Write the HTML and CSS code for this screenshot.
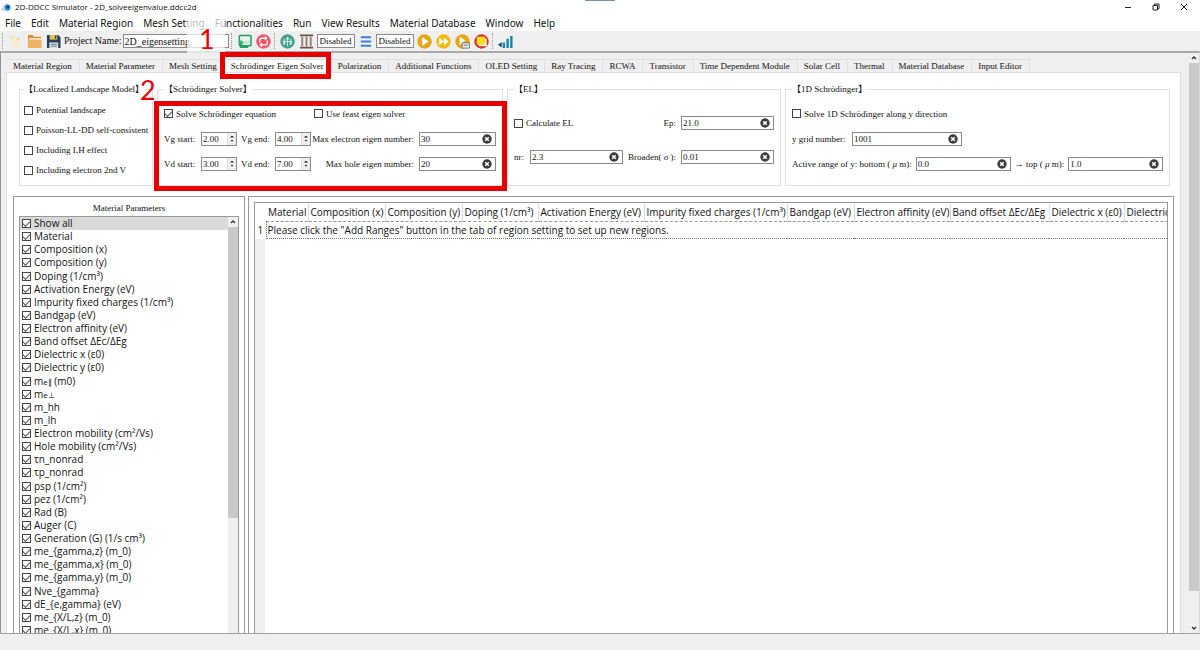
FILE: index.html
```html
<!DOCTYPE html>
<html lang="en">
<head>
<meta charset="utf-8">
<title>2D-DDCC Simulator</title>
<link rel="stylesheet" href="styles.css">
</head>
<body>
<svg class="defs" aria-hidden="true">
  <symbol id="clear" viewBox="0 0 10 10"><circle cx="5" cy="5" r="4.7" fill="#3c3c3c"/><path d="M3.2 3.2l3.6 3.6M6.8 3.2L3.2 6.8" stroke="#fff" stroke-width="1.5"/></symbol>
</svg>
<div class="window">
  <header class="titlebar">
    <svg class="app-icon" viewBox="0 0 12 12"><circle cx="6" cy="6" r="5" fill="#d8ecf8"/><circle cx="7" cy="6" r="3.2" fill="#2c86c8"/><circle cx="7.6" cy="5.4" r="1.5" fill="#123c70"/><circle cx="2" cy="8" r="1" fill="#7bb6dc"/></svg>
    <span class="title">2D-DDCC Simulator - 2D_solveeigenvalue.ddcc2d</span>
    <div class="window-buttons">
      <button type="button" aria-label="Minimize"><svg viewBox="0 0 8 8"><path d="M1 4.5h6" /></svg></button>
      <button type="button" aria-label="Restore"><svg viewBox="0 0 8 8"><path d="M1 2.5h4.500v4.500H1zM2.500 2.500V1H7v4.500H5.500"/></svg></button>
      <button type="button" aria-label="Close"><svg viewBox="0 0 8 8"><path d="M1 1l6 6M7 1L1 7"/></svg></button>
    </div>
  </header>
  <nav class="menubar">
    <button type="button">File</button><button type="button">Edit</button><button type="button">Material Region</button><button type="button">Mesh Setting</button><button type="button">Functionalities</button><button type="button">Run</button><button type="button">View Results</button><button type="button">Material Database</button><button type="button">Window</button><button type="button">Help</button>
  </nav>
  <div class="toolbar">
    <i class="handle"></i>
    <button type="button" class="tool" aria-label="New"><svg viewBox="0 0 16 16"><path d="M4 3h6l3 3v8H4z" fill="#f6eccb"/><path d="M10 3v3h3z" fill="#e2d3a0"/><path d="M4 1v5M2 3.500h4" stroke="#f4e3a4"/></svg></button>
    <button type="button" class="tool" aria-label="Open"><svg viewBox="0 0 16 16"><path d="M1 1h5l1.500 2H15v10H1z" fill="#d9913c"/><path d="M2 4.500h13v2H2z" fill="#fff3dd"/><path d="M1 6h14.500v9H1z" fill="#f0b263"/></svg></button>
    <button type="button" class="tool" aria-label="Save"><svg viewBox="0 0 16 16"><path d="M1 1h12l2.500 2.500V15H1z" fill="#28415c"/><path d="M4 1h8v5H4z" fill="#e9c34a"/><path d="M9.500 1.500h1.500v3.500H9.500z" fill="#28415c"/><path d="M3.500 9h9.500v6H3.500z" fill="#d5dde4"/><path d="M5 11h6.500M5 13h6.500" stroke="#6d7c8b"/></svg></button>
    <label for="project">Project Name:</label>
    <input id="project" class="project" type="text" value="2D_eigensetting">
    <i class="handle"></i>
    <button type="button" class="tool" aria-label="Display"><svg viewBox="0 0 16 16"><rect x="2.500" y="1.500" width="12.500" height="11" rx="1" fill="#e6f5ec" stroke="#219b5d" stroke-width="1.600"/><path d="M6 10l3-4 2 2 3-3v6z" fill="#c3e8d3"/><path d="M3 9h2.500v3.500H12V15H3z" fill="#24a35f"/><path d="M4.500 6l3.500 4H1z" fill="#38bd76"/></svg></button>
    <button type="button" class="tool" aria-label="Refresh"><svg viewBox="0 0 16 16"><circle cx="8" cy="8" r="7.700" fill="#ed5565"/><path d="M4 9V6.500A2 2 0 0 1 6 4.500h4M12 7v2.500a2 2 0 0 1-2 2H6" fill="none" stroke="#fff" stroke-width="1.400"/><path d="M9.500 2l3 2.500-3 2.500zM6.500 9v5l-3-2.500z" fill="#fff"/></svg></button>
    <i class="handle"></i>
    <button type="button" class="tool" aria-label="Mesh"><svg viewBox="0 0 16 16"><circle cx="8" cy="8" r="7.700" fill="#47a08d"/><path d="M8 3v10M4.500 5v6M11.500 5v6M3 8h10" stroke="#d7f0e9" stroke-width="1"/><circle cx="8" cy="5" r="1.400" fill="#d7f0e9"/><circle cx="4.500" cy="10" r="1.300" fill="#d7f0e9"/><circle cx="11.500" cy="10" r="1.300" fill="#d7f0e9"/></svg></button>
    <button type="button" class="tool" aria-label="Columns"><svg viewBox="0 0 16 16"><path d="M1 1.500h14M1 14.500h14" stroke="#6c5148" stroke-width="2"/><path d="M3.500 3v10M8 3v10M12.500 3v10" stroke="#937d75" stroke-width="2"/></svg></button>
    <input class="state" type="text" value="Disabled" aria-label="Column state" readonly>
    <button type="button" class="tool" aria-label="Rows"><svg viewBox="0 0 16 16"><path d="M3 3.500h11M3 8h11M3 12.500h11" stroke="#3a83d8" stroke-width="2.200"/></svg></button>
    <input class="state" type="text" value="Disabled" aria-label="Row state" readonly>
    <button type="button" class="tool" aria-label="Run"><svg viewBox="0 0 16 16"><circle cx="8" cy="8" r="7.700" fill="#e5a812"/><path d="M5.500 3.500l7 4.500-7 4.500z" fill="#fff"/></svg></button>
    <button type="button" class="tool" aria-label="Run all"><svg viewBox="0 0 16 16"><circle cx="8" cy="8" r="7.700" fill="#f0b914"/><path d="M3.500 4l5 4-5 4zM8.500 4l5 4-5 4z" fill="#fff"/></svg></button>
    <button type="button" class="tool" aria-label="Run script"><svg viewBox="0 0 16 16"><circle cx="8" cy="8" r="7.700" fill="#e5a812"/><path d="M5 3l6 4-6 5z" fill="#fff"/><path d="M7.500 9.500h8V15h-8z" fill="#f4f4ef" stroke="#75705e"/><path d="M9 12h5" stroke="#4b6f86"/></svg></button>
    <button type="button" class="tool" aria-label="Stop"><svg viewBox="0 0 16 16"><circle cx="8" cy="8" r="7.700" fill="#d8332c"/><path d="M5 5h8.500v8H5z" fill="#fff"/><rect x="3" y="3" width="9" height="8.500" rx="1" fill="#f8df22"/></svg></button>
    <i class="handle"></i>
    <button type="button" class="tool chart" aria-label="Chart"><svg viewBox="0 0 16 16"><path d="M5 9h2.500v6H5zM9 5h2.500v10H9zM13 2h2.500v13H13z" fill="#1681ae"/><path d="M0 11.500l4-3v6z" fill="#164d73"/></svg></button>
  </div>
  <main class="workspace">
    <div class="content">
      <div class="tabs" role="tablist">
        <button type="button" role="tab">Material Region</button><button type="button" role="tab">Material Parameter</button><button type="button" role="tab">Mesh Setting</button><button type="button" role="tab" class="active" aria-selected="true">Schrödinger Eigen Solver</button><button type="button" role="tab">Polarization</button><button type="button" role="tab">Additional Functions</button><button type="button" role="tab">OLED Setting</button><button type="button" role="tab">Ray Tracing</button><button type="button" role="tab">RCWA</button><button type="button" role="tab">Transistor</button><button type="button" role="tab">Time Dependent Module</button><button type="button" role="tab">Solar Cell</button><button type="button" role="tab">Thermal</button><button type="button" role="tab">Material Database</button><button type="button" role="tab">Input Editor</button>
      </div>
      <section class="page">
        <div class="groups">
          <fieldset class="landscape">
            <legend>【Localized Landscape Model】</legend>
            <label class="check"><input type="checkbox">Potential landscape</label>
            <label class="check"><input type="checkbox">Poisson-LL-DD self-consistent</label>
            <label class="check"><input type="checkbox">Including LH effect</label>
            <label class="check"><input type="checkbox">Including electron 2nd V</label>
          </fieldset>
          <fieldset class="solver">
            <legend>【Schrödinger Solver】</legend>
            <label class="check wide"><input type="checkbox" checked>Solve Schrödinger equation</label>
            <label class="check pair"><input type="checkbox">Use feast eigen solver</label>
            <label for="vgs">Vg start:</label>
            <span class="spin"><input id="vgs" type="text" value="2.00"><span class="steps"><button type="button" aria-label="Up"></button><button type="button" aria-label="Down"></button></span></span>
            <label for="vge" class="end">Vg end:</label>
            <span class="spin"><input id="vge" type="text" value="4.00"><span class="steps"><button type="button" aria-label="Up"></button><button type="button" aria-label="Down"></button></span></span>
            <label for="maxe" class="right">Max electron eigen number:</label>
            <span class="field"><input id="maxe" type="text" value="30"><button type="button" aria-label="Clear"><svg><use href="#clear"/></svg></button></span>
            <label for="vds">Vd start:</label>
            <span class="spin"><input id="vds" type="text" value="3.00"><span class="steps"><button type="button" aria-label="Up"></button><button type="button" aria-label="Down"></button></span></span>
            <label for="vde" class="end">Vd end:</label>
            <span class="spin"><input id="vde" type="text" value="7.00"><span class="steps"><button type="button" aria-label="Up"></button><button type="button" aria-label="Down"></button></span></span>
            <label for="maxh" class="right">Max hole eigen number:</label>
            <span class="field"><input id="maxh" type="text" value="20"><button type="button" aria-label="Clear"><svg><use href="#clear"/></svg></button></span>
          </fieldset>
          <fieldset class="el">
            <legend>【EL】</legend>
            <label class="check wide"><input type="checkbox">Calculate EL</label>
            <label for="ep" class="right">Ep:</label>
            <span class="field"><input id="ep" type="text" value="21.0"><button type="button" aria-label="Clear"><svg><use href="#clear"/></svg></button></span>
            <label for="nr">nr:</label>
            <span class="field"><input id="nr" type="text" value="2.3"><button type="button" aria-label="Clear"><svg><use href="#clear"/></svg></button></span>
            <label for="broaden" class="right">Broaden( <em>σ</em> ):</label>
            <span class="field"><input id="broaden" type="text" value="0.01"><button type="button" aria-label="Clear"><svg><use href="#clear"/></svg></button></span>
          </fieldset>
          <fieldset class="oned">
            <legend>【1D Schrödinger】</legend>
            <label class="check"><input type="checkbox">Solve 1D Schrödinger along y direction</label>
            <div class="line">
              <label for="grid" class="grid-label">y grid number:</label>
              <span class="field grid-field"><input id="grid" type="text" value="1001"><button type="button" aria-label="Clear"><svg><use href="#clear"/></svg></button></span>
            </div>
            <div class="line">
              <label for="bottom">Active range of y: bottom ( <em>μ</em> m):</label>
              <span class="field"><input id="bottom" type="text" value="0.0"><button type="button" aria-label="Clear"><svg><use href="#clear"/></svg></button></span>
              <label for="top">→ top ( <em>μ</em> m):</label>
              <span class="field"><input id="top" type="text" value="1.0"><button type="button" aria-label="Clear"><svg><use href="#clear"/></svg></button></span>
            </div>
          </fieldset>
        </div>
        <div class="panels">
          <section class="panel params">
            <h2>Material Parameters</h2>
            <div class="listbox">
              <div class="rows">
                <label class="selected"><input type="checkbox" checked>Show all</label>
                <label><input type="checkbox" checked>Material</label>
                <label><input type="checkbox" checked>Composition (x)</label>
                <label><input type="checkbox" checked>Composition (y)</label>
                <label><input type="checkbox" checked>Doping (1/cm³)</label>
                <label><input type="checkbox" checked>Activation Energy (eV)</label>
                <label><input type="checkbox" checked>Impurity fixed charges (1/cm³)</label>
                <label><input type="checkbox" checked>Bandgap (eV)</label>
                <label><input type="checkbox" checked>Electron affinity (eV)</label>
                <label><input type="checkbox" checked>Band offset ΔEc/ΔEg</label>
                <label><input type="checkbox" checked>Dielectric x (ε0)</label>
                <label><input type="checkbox" checked>Dielectric y (ε0)</label>
                <label><input type="checkbox" checked><span>m<small>e∥</small> (m0)</span></label>
                <label><input type="checkbox" checked><span>m<small>e⊥</small></span></label>
                <label><input type="checkbox" checked>m_hh</label>
                <label><input type="checkbox" checked>m_lh</label>
                <label><input type="checkbox" checked>Electron mobility (cm²/Vs)</label>
                <label><input type="checkbox" checked>Hole mobility (cm²/Vs)</label>
                <label><input type="checkbox" checked>τn_nonrad</label>
                <label><input type="checkbox" checked>τp_nonrad</label>
                <label><input type="checkbox" checked>psp (1/cm²)</label>
                <label><input type="checkbox" checked>pez (1/cm²)</label>
                <label><input type="checkbox" checked>Rad (B)</label>
                <label><input type="checkbox" checked>Auger (C)</label>
                <label><input type="checkbox" checked>Generation (G) (1/s cm³)</label>
                <label><input type="checkbox" checked>me_{gamma,z} (m_0)</label>
                <label><input type="checkbox" checked>me_{gamma,x} (m_0)</label>
                <label><input type="checkbox" checked>me_{gamma,y} (m_0)</label>
                <label><input type="checkbox" checked>Nve_{gamma}</label>
                <label><input type="checkbox" checked>dE_{e,gamma} (eV)</label>
                <label><input type="checkbox" checked>me_{X/L,z} (m_0)</label>
                <label><input type="checkbox" checked>me_{X/L,x} (m_0)</label>
              </div>
              <div class="scrollbar list-scroll"><svg viewBox="0 0 10 10"><path d="M3 6l2-2 2 2"/></svg><i></i></div>
            </div>
          </section>
          <section class="panel regions">
            <div class="table-frame">
              <table>
                <colgroup><col class="c0"><col class="c1"><col class="c2"><col class="c3"><col class="c4"><col class="c5"><col class="c6"><col class="c7"><col class="c8"><col class="c9"><col class="c10"><col class="c11"></colgroup>
                <thead><tr><td></td><th>Material</th><th>Composition (x)</th><th>Composition (y)</th><th>Doping (1/cm³)</th><th>Activation Energy (eV)</th><th>Impurity fixed charges (1/cm³)</th><th>Bandgap (eV)</th><th>Electron affinity (eV)</th><th>Band offset ΔEc/ΔEg</th><th>Dielectric x (ε0)</th><th>Dielectric y (ε0)</th></tr></thead>
                <tbody><tr><th>1</th><td colspan="11">Please click the "Add Ranges" button in the tab of region setting to set up new regions.</td></tr></tbody>
              </table>
              <div class="gutter"></div>
            </div>
          </section>
        </div>
      </section>
    </div>
    <div class="scrollbar main-scroll"><svg viewBox="0 0 10 10"><path d="M3 6l2-2 2 2"/></svg><i></i><svg viewBox="0 0 10 10"><path d="M3 4l2 2 2-2"/></svg></div>
  </main>
  <footer class="statusbar"></footer>
  <div class="snap"></div>
  <div class="veil"></div>
  <div class="mark mark-tab"></div>
  <div class="mark mark-group"></div>
  <span class="step step-one">1</span>
  <span class="step step-two">2</span>
</div>
</body>
</html>
```
FILE: styles.css
```css
* { box-sizing: border-box; }
body {
  margin: 0;
  font-family: "Liberation Serif", "Noto Sans CJK TC", serif;
  font-size: 9px;
  line-height: 12px;
  color: #111;
}
button, input { font: inherit; color: inherit; }
button { border: 0; padding: 0; background: none; }
.defs { display: none; }
.window {
  position: relative;
  display: flex;
  flex-direction: column;
  height: 100vh;
  overflow: hidden;
  background: #fff;
}

/* Title bar, menu and tools */
.titlebar {
  display: flex;
  align-items: center;
  height: 14px;
  padding-left: 1px;
  font-family: "Open Sans", sans-serif;
  font-size: 8px;
}
.app-icon { width: 11px; height: 11px; }
.title { margin-left: 3px; }
.window-buttons { display: flex; gap: 20px; margin-left: auto; padding-right: 12px; }
.window-buttons button { width: 8px; height: 8px; }
.window-buttons svg { display: block; fill: none; stroke: #222; stroke-width: 1; }
.menubar {
  display: flex;
  gap: 10px;
  height: 17px;
  padding-left: 5px;
  font-family: "Noto Sans", sans-serif;
  font-size: 10px;
  white-space: nowrap;
}
.toolbar {
  display: flex;
  align-items: center;
  gap: 2px;
  height: 20px;
  padding-left: 2px;
  background: #efefef;
  font-size: 10px;
}
.handle { width: 3px; height: 16px; border-left: 1px dotted #999; }
.tool { width: 15px; height: 15px; margin: 0 1px; }
.tool svg { display: block; width: 15px; height: 15px; }
.toolbar input { height: 14px; padding: 0 1px; border: 1px solid #8a8a8a; background: #fff; }
.toolbar .project { width: 106px; padding: 0; }
.toolbar .state { width: 38px; font-size: 9px; }

/* Scrolling workspace */
.workspace {
  display: flex;
  flex: 1;
  min-height: 0;
  border-top: 2px solid #a9a9a9;
  border-bottom: 1px solid #a0a0a0;
  border-left: 1px solid #8f949c;
  border-right: 1px solid #d8d8d8;
  background: #efefef;
}
.content { display: flex; flex: 1; flex-direction: column; min-width: 0; padding: 6px 8px 0 5px; }
.tabs { display: flex; padding-left: 1px; }
.tabs button {
  height: 13px;
  padding: 0 7px 0 6px;
  border: 1px solid #e0e0e0;
  border-width: 1px 1px 0 0;
  white-space: nowrap;
}
.tabs .active { background: #fff; }
.page {
  display: flex;
  flex: 1;
  flex-direction: column;
  gap: 10px;
  min-height: 0;
  padding: 10px 6px 0;
  border: 1px solid #e0e0e0;
  border-bottom: 0;
  background: #fff;
}
.groups {
  display: grid;
  grid-template-columns: 134fr 346fr 274fr 385fr;
  gap: 4px;
  padding: 0 4px 0 6px;
}
fieldset {
  min-width: 0;
  height: 103px;
  margin: 0;
  padding: 0 6px;
  border: 1px solid #e0e0e0;
  white-space: nowrap;
}
legend { padding: 0; line-height: 12px; }
.check { display: flex; align-items: center; gap: 3px; }
input[type="checkbox"] {
  display: grid;
  flex: none;
  place-items: center;
  width: 9px;
  height: 9px;
  margin: 0;
  border: 1px solid #444;
  background: #fff;
  appearance: none;
}
input[type="checkbox"]:checked::before {
  content: "";
  width: 6px;
  height: 3px;
  margin-bottom: 1px;
  border: solid #555;
  border-width: 0 0 1px 1px;
  transform: rotate(-45deg);
}
.landscape { display: grid; grid-auto-rows: 20px; align-items: center; padding: 5px 4px 0; }
.solver {
  display: grid;
  grid-template-columns: 37px 36px 38px 36px 108px 1fr;
  grid-auto-rows: 25px;
  align-items: center;
  padding-top: 6px;
}
.solver .wide { grid-column: span 4; }
.solver .pair { grid-column: span 2; padding-left: 3px; }
.end { padding-left: 4px; }
.right { padding-right: 5px; text-align: right; }
.el { display: grid; grid-template-columns: 16px 1fr 58px 1fr; grid-auto-rows: 34px; align-items: center; padding-top: 11px; }
.el .wide { grid-column: span 2; }
.oned { display: grid; grid-auto-rows: 25px; align-items: center; padding-top: 6px; }
.line { display: flex; align-items: center; gap: 4px; }
.grid-label { width: 56px; }
.line .field { flex: 1; }
.line .grid-field { flex: 0 0 110px; }
.field, .spin { display: flex; min-width: 0; height: 14px; border: 1px solid #8a8a8a; background: #fff; }
.field { align-items: center; padding-right: 3px; }
.field input, .spin input { flex: 1; width: 0; min-width: 0; height: 12px; padding: 0 1px; border: 0; background: none; outline: 0; }
.field button, .field svg { display: block; width: 10px; height: 10px; }
.steps { display: flex; flex-direction: column; justify-content: center; gap: 2px; width: 9px; background: #eee; border-left: 1px solid #ddd; }
.steps button { width: 4px; height: 2px; margin: 0 2px; background: #222; clip-path: polygon(50% 0, 100% 100%, 0 100%); }
.steps button + button { clip-path: polygon(0 0, 100% 0, 50% 100%); }

/* Lower panels */
.panels { display: grid; flex: 1; grid-template-columns: 232px 1fr; gap: 3px; min-height: 0; }
.panel { display: flex; flex-direction: column; min-width: 0; min-height: 0; padding: 5px 5px 0; border: 1px solid #999; border-bottom: 0; }
h2 { margin: 0 0 2px; font-size: 9px; font-weight: 400; line-height: 12px; text-align: center; }
.listbox {
  display: flex;
  flex: 1;
  min-height: 0;
  border: 1px solid #999;
  border-bottom: 0;
  overflow: hidden;
  font-family: "Open Sans", sans-serif;
  font-size: 10px;
  line-height: 13px;
}
.rows { display: grid; flex: 1; grid-auto-rows: 1fr; height: calc(100% + 4px); }
.rows label { display: flex; align-items: center; gap: 3px; padding-left: 2px; white-space: nowrap; }
.rows .selected { background: #d9d9d9; }
.rows small { font-size: 8px; }
.scrollbar { display: flex; flex-direction: column; width: 10px; background: #f0f0f0; }
.scrollbar svg { width: 10px; height: 10px; fill: none; stroke: #333; stroke-width: 1.3; }
.scrollbar i { background: #c9c9c9; }
.list-scroll i { height: 70%; }
.main-scroll i { flex: 0 0 91%; }
.main-scroll svg:last-child { margin-top: auto; }
.table-frame {
  display: flex;
  flex: 1;
  flex-direction: column;
  border: 1px solid #999;
  border-bottom: 0;
  overflow: hidden;
  font-family: "Open Sans", sans-serif;
  font-size: 10px;
}
table { flex: none; width: 980px; border-collapse: collapse; table-layout: fixed; }
th, td { height: 18px; padding: 0; font-weight: 400; white-space: nowrap; }
thead th { padding-left: 2px; border-right: 1px solid #ddd; border-bottom: 1px dashed #999; text-align: left; }
tbody th { height: 17px; }
tbody td { height: 17px; padding-left: 1px; border: 1px dotted #777; }
.c0 { width: 11px; }
.c1 { width: 42px; }
.c2, .c3 { width: 77px; }
.c4 { width: 76px; }
.c5 { width: 106px; }
.c6 { width: 143px; }
.c7 { width: 67px; }
.c8 { width: 96px; }
.c9 { width: 99px; }
.c10 { width: 75px; }
.gutter { flex: 1; width: 10px; background: #efefef; }
.statusbar { height: 16px; background: #efefef; }

/* Annotations over the window */
.snap { position: absolute; top: 0; left: 585px; width: 30px; height: 1px; background: #7790ad; }
.veil { position: absolute; top: 15px; left: 187px; width: 38px; height: 38px; background: #fff; opacity: 0.7; }
.mark { position: absolute; border: 5px solid #e60000; }
.mark-tab { top: 52px; left: 220px; width: 111px; height: 27px; }
.mark-group { top: 101px; left: 154px; width: 353px; height: 90px; }
.step { position: absolute; font-family: Lato, sans-serif; font-size: 27px; line-height: 28px; color: #e60000; }
.step-one { top: 25px; left: 199px; }
.step-two { top: 76px; left: 140px; }
```
